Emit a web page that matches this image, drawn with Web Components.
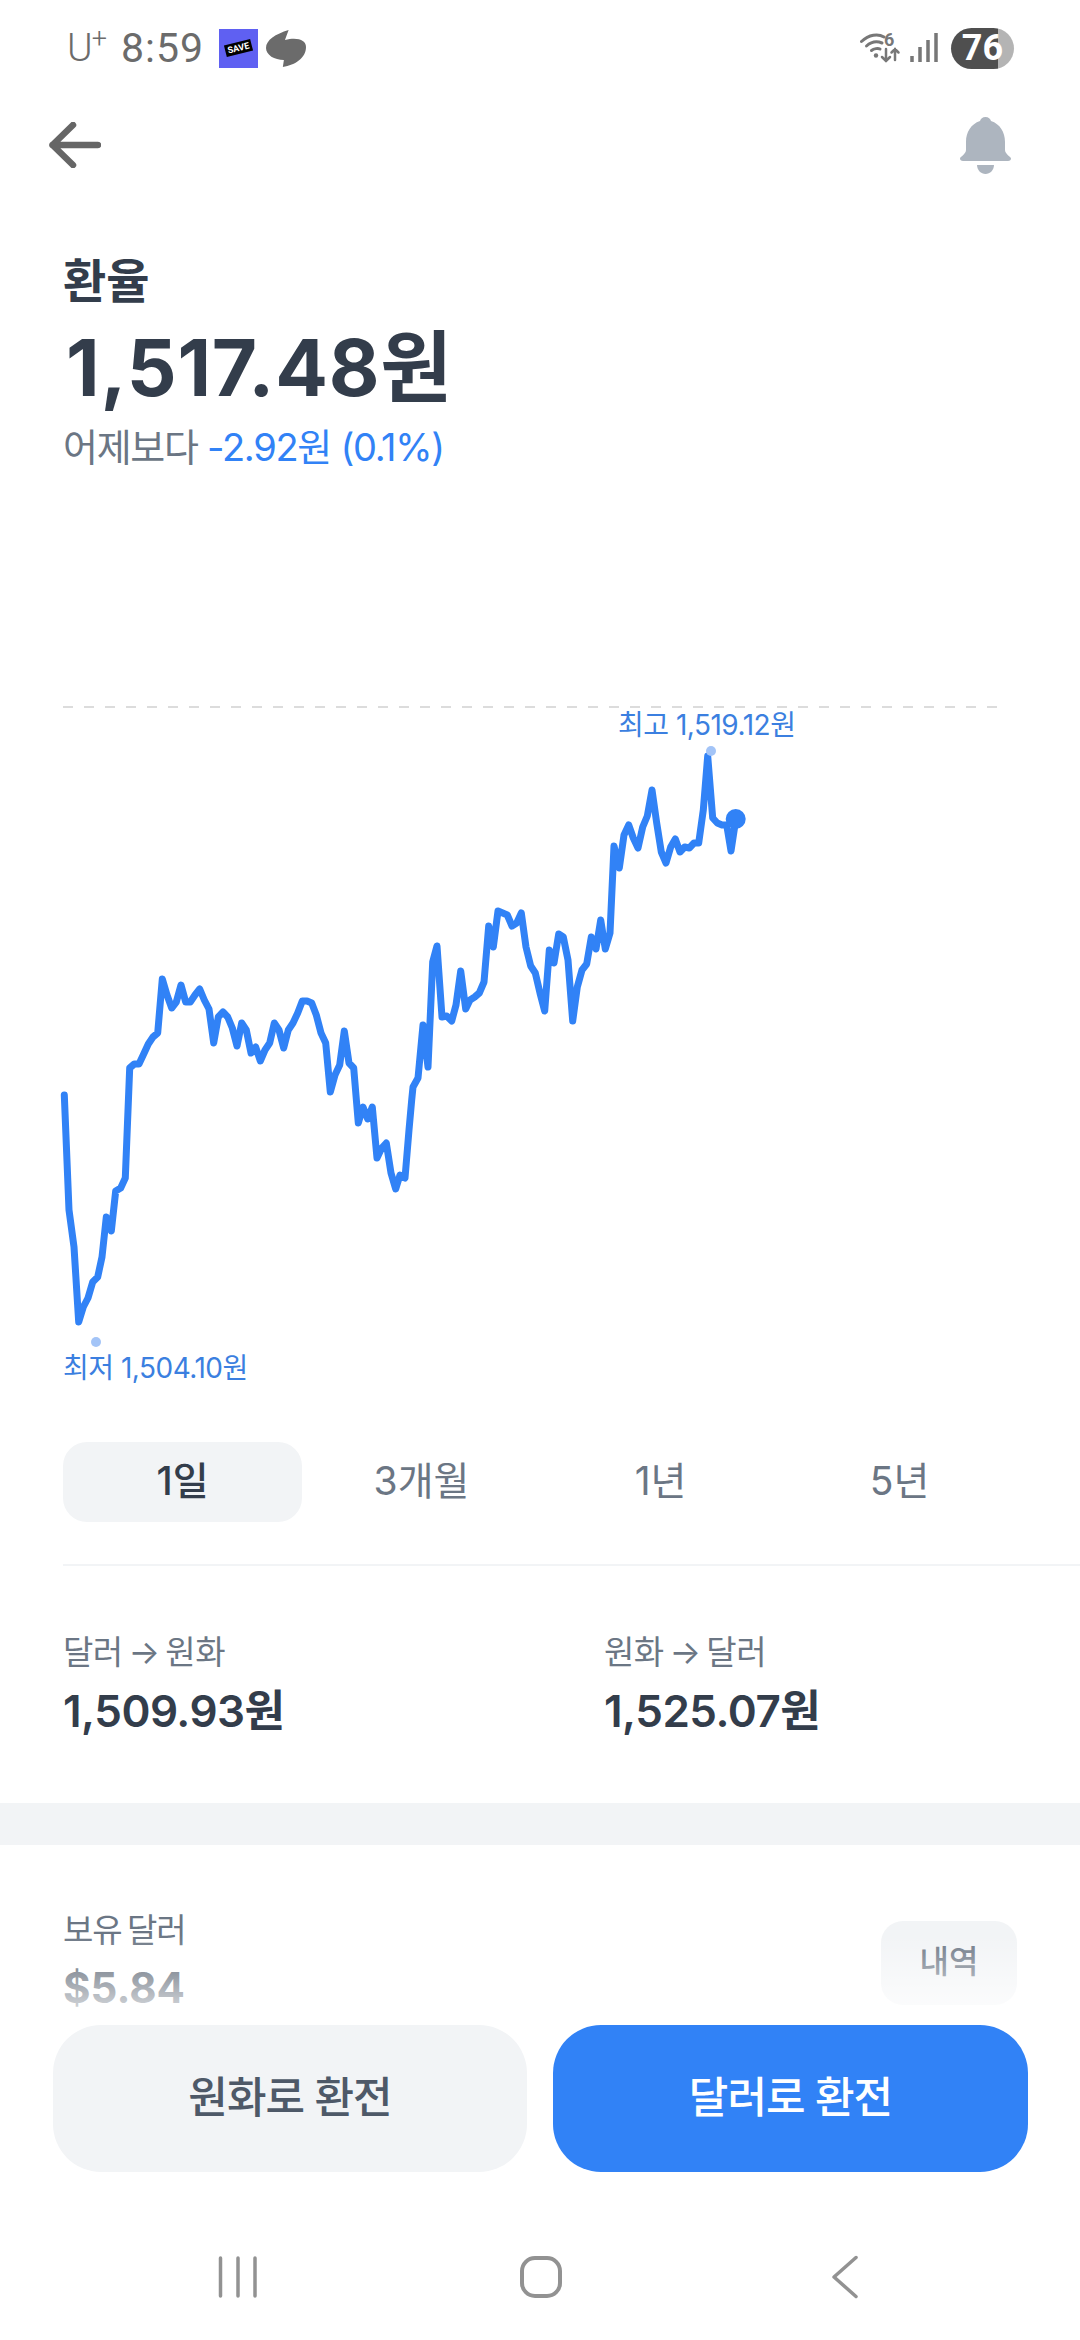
<!DOCTYPE html>
<html lang="ko">
<head>
<meta charset="utf-8">
<title>환율</title>
<style>
    html, body {
        margin: 0;
        padding: 0;
        background: #fff;
    }
    body {
        position: relative;
        width: 1080px;
        height: 2340px;
        overflow: hidden;
        font-family: Inter, "Noto Sans CJK KR", sans-serif;
        color: #333d4b;
    }
</style>
</head>
<body>
    <status-bar></status-bar>
    <top-nav></top-nav>
    <rate-header title="환율" price="1,517.48원" label="어제보다" change="-2.92원 (0.1%)"></rate-header>
    <rate-chart high="최고 1,519.12원" low="최저 1,504.10원"></rate-chart>
    <period-tabs>
        <period-tab active>1일</period-tab>
        <period-tab>3개월</period-tab>
        <period-tab>1년</period-tab>
        <period-tab>5년</period-tab>
    </period-tabs>
    <rate-pair>
        <rate-cell label="달러 → 원화" value="1,509.93원"></rate-cell>
        <rate-cell label="원화 → 달러" value="1,525.07원"></rate-cell>
    </rate-pair>
    <holding-row label="보유 달러" value="$5.84" action="내역"></holding-row>
    <action-footer>
        <action-button>원화로 환전</action-button>
        <action-button primary>달러로 환전</action-button>
    </action-footer>
    <system-nav></system-nav>

<script>
class StatusBar extends HTMLElement {
    constructor() {
        super();
        this.attachShadow({ mode: 'open' });
        this.shadowRoot.innerHTML = `
    <style>
        :host {
            display: flex;
            align-items: center;
            justify-content: space-between;
            height: 96px;
            padding: 0 66px 0 67px;
            font-family: Roboto, sans-serif;
            color: #6b6b6b;
        }
        .left, .right {
            display: flex;
            align-items: center;
        }
        .carrier {
            font-size: 39px;
            font-weight: 300;
        }
        .carrier sup {
            font-size: 27px;
            line-height: 0;
            vertical-align: 13px;
            margin-left: -1px;
        }
        .time {
            font-size: 41px;
            letter-spacing: 1px;
            margin-left: 14px;
        }
        .save {
            position: relative;
            width: 39px;
            height: 39px;
            margin-left: 15px;
            background: #5f60f2;
        }
        .save span {
            position: absolute;
            left: 6px;
            top: 13px;
            width: 27px;
            height: 12px;
            background: #000;
            color: #fff;
            font: 700 9px/12px Roboto, sans-serif;
            text-align: center;
            transform: rotate(-14deg);
        }
        .swirl {
            margin-left: 8px;
        }
        .battery {
            width: 63px;
            height: 41px;
            margin-left: 13px;
            border-radius: 21px;
            background: linear-gradient(90deg, #4f4f4f 75%, #b4b4b4 75%);
            color: #fff;
            font-size: 36px;
            font-weight: 700;
            line-height: 41px;
            text-align: center;
        }
    </style>
    <div class="left">
        <span class="carrier">U<sup>+</sup></span>
        <span class="time">8:59</span>
        <div class="save"><span>SAVE</span></div>
        <svg class="swirl" width="40" height="37" viewBox="257 30 38 37" preserveAspectRatio="none">
            <path fill="#6b6b6b" d="M278.5 30C266 34 257 40 257 48C257 55 265 60 274 60L273 67C285 65 295 58 295 47C295 40 287 37 275 40Z"/>
        </svg>
    </div>
    <div class="right">
        <svg width="78" height="46" viewBox="861 25 78 46" fill="none" stroke="#777" stroke-linecap="round">
            <path stroke-width="3" d="M862.5 41.500C870 34.500 879 33.500 885 37"/>
            <path stroke-width="3" d="M867.500 46C872 42 878 41 883 43"/>
            <path stroke-width="3" d="M872.500 50.500C875 48.500 879 48 881 49"/>
            <circle cx="877" cy="55.500" r="2.200" fill="#777" stroke="none"/>
            <text x="885" y="46" fill="#777" stroke="none" font-family="Roboto, sans-serif" font-size="18" font-weight="700">6</text>
            <path stroke-width="2.500" d="M887 49V61M883 57L887 61L891 57"/>
            <path stroke-width="2.500" d="M896 60V49M892.500 52.500L896 49L899.500 52.500"/>
            <g stroke-width="3.500" stroke-linecap="butt">
                <path d="M913 62V56M921 62V47M929 62V40M937 62V33"/>
            </g>
        </svg>
        <div class="battery">76</div>
    </div>
        `;
    }
}
customElements.define('status-bar', StatusBar);


class TopNav extends HTMLElement {
    constructor() {
        super();
        this.attachShadow({ mode: 'open' });
        this.shadowRoot.innerHTML = `
    <style>
        :host {
            display: flex;
            align-items: center;
            justify-content: space-between;
            height: 98px;
            padding: 0 69px 0 49px;
        }
        svg {
            display: block;
        }
    </style>
    <svg width="52" height="46" viewBox="0 0 52 46" fill="none" stroke="#666" stroke-width="6.500" stroke-linecap="round" stroke-linejoin="round">
        <path d="M49 23H3.500M24 3L3.500 23L24 43"/>
    </svg>
    <svg width="51" height="57" viewBox="0 0 51 57" fill="#adb5bf">
        <path d="M25.500 0C28.500 0 30.500 2 31 4C40 7 45 15 45 25V33C45 37 51 40 51 41.500C51 43 50 44 48 44H3C1 44 0 43 0 41.500C0 40 6 37 6 33V25C6 15 11 7 20 4C20.500 2 22.500 0 25.500 0Z"/>
        <path d="M17 48H34C34 53 30 57 25.500 57C21 57 17 53 17 48Z"/>
    </svg>
        `;
    }
}
customElements.define('top-nav', TopNav);


class RateHeader extends HTMLElement {
    constructor() {
        super();
        this.attachShadow({ mode: 'open' });
        this.shadowRoot.innerHTML = `
    <style>
        :host {
            display: block;
            padding: 57px 63px 0;
        }
        .title {
            font-size: 47px;
            font-weight: 700;
            line-height: 60px;
        }
        .price {
            margin: 12px 0 0 3px;
            font-size: 78px;
            font-weight: 700;
            line-height: 90px;
            letter-spacing: 0.8px;
        }
        .sub {
            margin-top: 9px;
            font-size: 38px;
            line-height: 50px;
            letter-spacing: -1.3px;
            color: #6b7684;
        }
        .change {
            color: #3182f6;
        }
    </style>
    <div class="title"></div>
    <div class="price"></div>
    <div class="sub"><span class="label"></span> <span class="change"></span></div>
        `;
    }

    connectedCallback() {
        this.render();
    }

    render() {
        this.shadowRoot.querySelector('.title').textContent = this.getAttribute('title');
        this.shadowRoot.querySelector('.price').textContent = this.getAttribute('price');
        this.shadowRoot.querySelector('.label').textContent = this.getAttribute('label');
        this.shadowRoot.querySelector('.change').textContent = this.getAttribute('change');
    }
}
customElements.define('rate-header', RateHeader);


// chart points are in page pixels, the viewBox starts at y=700
const CHART_POINTS = [
    [64.3,1095],[69,1210],[74,1247],[78.7,1322],[83.3,1307],[88,1298],[92.7,1282],[97.7,1277],[102,1257],[106.3,1217],
    [111.3,1231],[115.7,1191],[120.7,1188],[125.3,1178],[129.7,1068],[134.3,1064],[139,1064],[143.7,1054],[148.3,1044],[153,1037],
    [157.7,1033],[162.3,979],[167,995],[171.7,1008],[176.3,1002],[181,985],[185.7,1002],[190.3,1002],[195,995],[199.7,989],
    [204.3,1000],[209,1009],[213.7,1043],[218.3,1017],[223,1012],[227.7,1017],[232.3,1028],[237,1046],[241.7,1023],[246.3,1030],
    [251,1053],[255.7,1047],[260.3,1061],[265,1050],[269.7,1043],[274.3,1023],[279,1030],[283.7,1048],[288.3,1030],[293,1023],
    [297.7,1013],[302.3,1001],[307,1001],[311.7,1003],[316.3,1015],[321,1033],[325.7,1043],[330.3,1092],[335,1075],[339.7,1065],
    [344.3,1031],[349,1063],[353.7,1068],[358.3,1123],[363,1107],[367.7,1119],[372.3,1107],[377,1158],[381.7,1148],[386.3,1143],
    [391,1173],[395.7,1189],[400,1175],[405,1178],[409,1130],[411.7,1100],[413,1087],[418,1078],[423,1025],[428,1067],
    [432.7,962],[437,946],[442,1017],[446.7,1016],[451.7,1021],[456,1005],[460.7,971],[465.7,1009],[470,1000],[474.7,997],
    [479.3,993],[484,982],[488.7,926],[493.3,947],[498,911],[502.7,913],[507.3,915],[512,926],[516.7,923],[521.3,913],
    [526,947],[530.7,966],[535.3,973],[540,993],[544.7,1011],[549.3,950],[554,963],[558.7,934],[563.3,937],[568,960],
    [572.7,1021],[577.3,987],[582,970],[586.7,964],[591.3,937],[596,949],[600.7,920],[605.3,949],[610,933],[614,846],
    [619.3,868],[624,835],[628.7,825],[633.3,838],[638,848],[642.7,827],[647.3,816],[652,790],[656.7,823],[661.3,852],
    [666,863],[670.7,847],[675.3,839],[680,852],[684.7,847],[689.3,848],[694,843],[698.7,843],[703.3,810],[707.7,756],
    [712.7,818],[717.3,823],[722,825],[726.7,825],[731,851],[735.7,820]
];

class RateChart extends HTMLElement {
    constructor() {
        super();
        this.attachShadow({ mode: 'open' });
        this.shadowRoot.innerHTML = `
    <style>
        :host {
            display: block;
            position: relative;
            height: 720px;
            margin-top: 228px;
        }
        svg {
            display: block;
        }
        .tag {
            position: absolute;
            font-size: 28px;
            line-height: 36px;
            letter-spacing: -0.5px;
            color: #3b7fe0;
            white-space: nowrap;
        }
        .high {
            left: 618px;
            top: 7px;
        }
        .low {
            left: 63px;
            top: 650px;
        }
    </style>
    <svg width="1080" height="720" viewBox="0 700 1080 720" fill="none">
        <line x1="63" y1="707" x2="1000" y2="707" stroke="#dcdcdc" stroke-width="2" stroke-dasharray="10 11"/>
        <polyline class="line" stroke="#3182f6" stroke-width="7" stroke-linejoin="round" stroke-linecap="round"/>
        <circle cx="711" cy="751" r="5" fill="#a3c4f7"/>
        <circle cx="96" cy="1342" r="5" fill="#a3c4f7"/>
        <circle cx="735.700" cy="819" r="10" fill="#3182f6"/>
    </svg>
    <span class="tag high"></span>
    <span class="tag low"></span>
        `;
    }

    connectedCallback() {
        this.render();
    }

    render() {
        const line = this.shadowRoot.querySelector('.line');
        line.setAttribute('points', CHART_POINTS.map(p => p.join(',')).join(' '));
        this.shadowRoot.querySelector('.high').textContent = this.getAttribute('high');
        this.shadowRoot.querySelector('.low').textContent = this.getAttribute('low');
    }
}
customElements.define('rate-chart', RateChart);


class PeriodTabs extends HTMLElement {
    constructor() {
        super();
        this.attachShadow({ mode: 'open' });
        this.shadowRoot.innerHTML = `
    <style>
        :host {
            display: block;
            margin: 22px 0 0 63px;
            padding-bottom: 42px;
            border-bottom: 2px solid #f2f4f6;
        }
        .row {
            display: grid;
            grid-template-columns: repeat(4, 239px);
        }
    </style>
    <div class="row"><slot></slot></div>
        `;
    }
}
customElements.define('period-tabs', PeriodTabs);


class PeriodTab extends HTMLElement {
    constructor() {
        super();
        this.attachShadow({ mode: 'open' });
        this.shadowRoot.innerHTML = `
    <style>
        :host {
            display: block;
            height: 80px;
            border-radius: 24px;
            font-size: 39px;
            line-height: 78px;
            text-align: center;
            color: #6b7684;
        }
        :host([active]) {
            background: #f2f4f6;
            color: #333d4b;
            font-weight: 500;
        }
    </style>
    <slot></slot>
        `;
    }
}
customElements.define('period-tab', PeriodTab);


class RatePair extends HTMLElement {
    constructor() {
        super();
        this.attachShadow({ mode: 'open' });
        this.shadowRoot.innerHTML = `
    <style>
        :host {
            display: grid;
            grid-template-columns: 541px 475px;
            height: 279px;
            padding: 64px 0 0 63px;
            box-sizing: border-box;
            border-bottom: 42px solid #f2f4f6;
        }
    </style>
    <slot></slot>
        `;
    }
}
customElements.define('rate-pair', RatePair);


class RateCell extends HTMLElement {
    constructor() {
        super();
        this.attachShadow({ mode: 'open' });
        this.shadowRoot.innerHTML = `
    <style>
        :host {
            display: block;
        }
        .label {
            font-size: 33px;
            line-height: 44px;
            letter-spacing: -0.5px;
            word-spacing: -3px;
            color: #6b7684;
        }
        .value {
            margin-top: 9px;
            font-size: 44px;
            font-weight: 600;
            line-height: 56px;
            letter-spacing: -0.5px;
        }
    </style>
    <div class="label"></div>
    <div class="value"></div>
        `;
    }

    connectedCallback() {
        this.shadowRoot.querySelector('.label').textContent = this.getAttribute('label');
        this.shadowRoot.querySelector('.value').textContent = this.getAttribute('value');
    }
}
customElements.define('rate-cell', RateCell);


class HoldingRow extends HTMLElement {
    constructor() {
        super();
        this.attachShadow({ mode: 'open' });
        this.shadowRoot.innerHTML = `
    <style>
        :host {
            display: flex;
            justify-content: space-between;
            padding: 63px 63px 0 63px;
        }
        .label {
            font-size: 33px;
            line-height: 44px;
            letter-spacing: -1px;
            word-spacing: -3px;
            color: #6b7684;
        }
        .value {
            margin-top: 8px;
            font-size: 42px;
            font-weight: 700;
            line-height: 56px;
            color: #4e5968;
        }
        .action {
            width: 136px;
            height: 84px;
            margin-top: 13px;
            border-radius: 22px;
            background: #f2f4f6;
            font-size: 32px;
            font-weight: 500;
            line-height: 82px;
            text-align: center;
            color: #6b7684;
        }
    </style>
    <div>
        <div class="label"></div>
        <div class="value"></div>
    </div>
    <div class="action"></div>
        `;
    }

    connectedCallback() {
        this.shadowRoot.querySelector('.label').textContent = this.getAttribute('label');
        this.shadowRoot.querySelector('.value').textContent = this.getAttribute('value');
        this.shadowRoot.querySelector('.action').textContent = this.getAttribute('action');
    }
}
customElements.define('holding-row', HoldingRow);


class ActionFooter extends HTMLElement {
    constructor() {
        super();
        this.attachShadow({ mode: 'open' });
        this.shadowRoot.innerHTML = `
    <style>
        /* sits over the scrolling content, the fade covers what is under it */
        :host {
            position: absolute;
            left: 0;
            right: 0;
            bottom: 168px;
            display: grid;
            grid-template-columns: 474px 475px;
            gap: 26px;
            padding: 90px 52px 0 53px;
            background:
                linear-gradient(rgba(255,255,255,0), rgba(255,255,255,.9) 90px, #fff 90px);
        }
    </style>
    <slot></slot>
        `;
    }
}
customElements.define('action-footer', ActionFooter);


class ActionButton extends HTMLElement {
    constructor() {
        super();
        this.attachShadow({ mode: 'open' });
        this.shadowRoot.innerHTML = `
    <style>
        :host {
            display: block;
            height: 147px;
            border-radius: 48px;
            background: #f2f4f6;
            font-size: 43px;
            font-weight: 500;
            line-height: 145px;
            letter-spacing: -1px;
            text-align: center;
            color: #4e5968;
        }
        :host([primary]) {
            background: #3182f6;
            color: #fff;
        }
    </style>
    <slot></slot>
        `;
    }
}
customElements.define('action-button', ActionButton);


class SystemNav extends HTMLElement {
    constructor() {
        super();
        this.attachShadow({ mode: 'open' });
        this.shadowRoot.innerHTML = `
    <style>
        :host {
            position: absolute;
            left: 0;
            right: 0;
            bottom: 0;
            height: 168px;
            background: #fff;
            display: block;
        }
        svg {
            display: block;
        }
    </style>
    <svg width="1080" height="168" viewBox="0 2172 1080 168" fill="none" stroke="#929292" stroke-linecap="round" stroke-linejoin="round">
        <path stroke-width="3.500" d="M220.500 2258V2296M238 2258V2296M255 2258V2296"/>
        <rect x="522" y="2258" width="38" height="38" rx="13" stroke-width="4"/>
        <path stroke-width="3.500" d="M856 2257.500L834 2277L856 2296.500"/>
    </svg>
        `;
    }
}
customElements.define('system-nav', SystemNav);
</script>
</body>
</html>
